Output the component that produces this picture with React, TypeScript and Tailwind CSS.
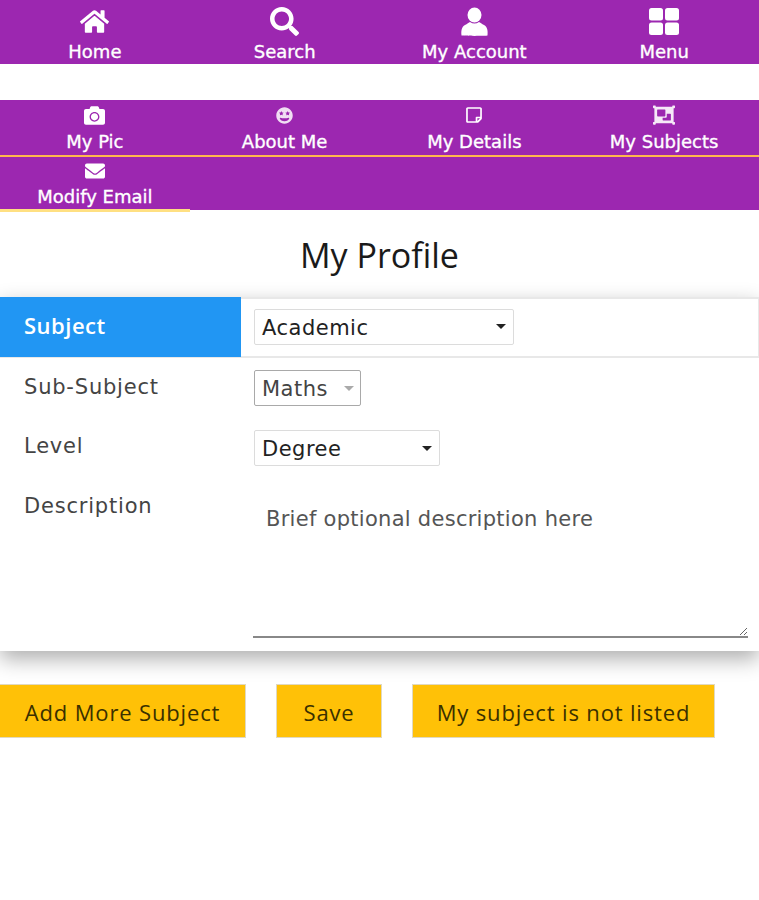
import React from "react";
import { FaHome, FaSearch, FaCamera, FaGrinStars, FaRegStickyNote, FaObjectGroup, FaEnvelope } from "react-icons/fa";

const UserIcon = () => (
  <svg width="27" height="29" viewBox="0 0 27 29" fill="white">
    <ellipse cx="13.5" cy="8" rx="7" ry="7.5" />
    <path d="M0.5 28.5 C0 24 0.5 20 4 18 C6 17 8 15.5 9 15 C12 17 15 17 18 15 C19 15.5 21 17 23 18 C26.5 20 27 24 26.5 28.5 C26 29 1 29 0.5 28.5 Z" />
  </svg>
);

const MenuIcon = () => (
  <svg width="30" height="27" viewBox="0 0 30 27" fill="white">
    <rect x="0" y="0" width="14" height="12.5" rx="2.5" />
    <rect x="16" y="0" width="14" height="12.5" rx="2.5" />
    <rect x="0" y="14.5" width="14" height="12.5" rx="2.5" />
    <rect x="16" y="14.5" width="14" height="12.5" rx="2.5" />
  </svg>
);

const Top = ({ icon, label }: { icon: React.ReactNode; label: string }) => (
  <div className="flex flex-col items-center h-[64px] pt-[7px]">
    <div className="h-[29px] flex items-center text-white">{icon}</div>
    <div className="text-[18px] leading-[24px] mt-[4px] text-white [-webkit-text-stroke:0.35px_white]">{label}</div>
  </div>
);

const Sub = ({ icon, label, tight }: { icon: React.ReactNode; label: string; tight?: boolean }) => (
  <div className="flex flex-col items-center h-full pt-[5px] text-white">
    <div className={`h-[20px] flex items-center ${tight ? "-mt-[1px]" : ""}`}>{icon}</div>
    <div className={`text-[18px] leading-[24px] ${tight ? "mt-[4px]" : "mt-[5px]"} [-webkit-text-stroke:0.35px_white]`}>{label}</div>
  </div>
);

const Caret = ({ color = "#222" }: { color?: string }) => (
  <svg width="10" height="5" viewBox="0 0 10 5" className="shrink-0"><path d="M0 0h10L5 5z" fill={color} /></svg>
);

const Select = ({ value, width, disabled }: { value: string; width: string; disabled?: boolean }) => (
  <div className={`${width} h-[36px] flex items-center justify-between bg-white border rounded-[2px] pl-[7px] ${disabled ? "border-[#a9a9a9] pr-[6px] text-[#444]" : "border-[#dcdcdc] pr-[7px] text-[#222]"} text-[21px] tracking-[0.5px]`}>
    <span className="pt-[4px]">{value}</span>
    <Caret color={disabled ? "#aaa" : "#222"} />
  </div>
);

const Btn = ({ label, className }: { label: string; className: string }) => (
  <button className={`h-[54px] pt-[2px] bg-[#ffc107] border border-[#e0d9c0] text-[#3a3000] text-[22px] tracking-[0.85px] font-['Open_Sans',sans-serif] ${className}`}>{label}</button>
);

const Label = ({ children, pt }: { children: React.ReactNode; pt: string }) => (
  <div className={`w-[241px] pl-[24px] ${pt} text-[21px] tracking-[0.8px] text-[#444]`}>{children}</div>
);

export default function App() {
  return (
    <div className="w-[759px] h-[900px] bg-white overflow-hidden font-['DejaVu_Sans',sans-serif]">
      <div className="grid grid-cols-4 bg-[#9c27b0] h-[64px]">
        <Top icon={<FaHome size={29} />} label="Home" />
        <Top icon={<FaSearch size={29} />} label="Search" />
        <Top icon={<UserIcon />} label="My Account" />
        <Top icon={<MenuIcon />} label="Menu" />
      </div>

      <div className="mt-[36px] bg-[#9c27b0]">
        <div className="grid grid-cols-4 h-[55px]">
          <Sub icon={<FaCamera size={21} />} label="My Pic" />
          <Sub icon={<FaGrinStars size={17} className="opacity-85" />} label="About Me" />
          <Sub icon={<FaRegStickyNote size={18} />} label="My Details" />
          <Sub icon={<FaObjectGroup size={22} className="opacity-90" />} label="My Subjects" />
        </div>
        <div className="h-[2px] bg-[#ffb74d]" />
        <div className="grid grid-cols-4 h-[53px]">
          <div className="border-b-[3px] border-[#ffe082]">
            <Sub icon={<FaEnvelope size={20} />} label="Modify Email" tight />
          </div>
        </div>
      </div>

      <h1 className="text-center text-[34px] leading-[44px] mt-[23px] text-[#1a1a1a] font-['Open_Sans',sans-serif]">My Profile</h1>

      <div className="mt-[20px] h-[354px] shadow-[0_8px_20px_rgba(0,0,0,0.32)]">
        <div className="flex h-[61px] border-y-2 border-r border-[#e8e8e8]">
          <div className="w-[241px] -mt-[2px] -mb-[1px] pb-[3px] bg-[#2196f3] text-white text-[22px] tracking-[0.5px] pl-[24px] flex items-center font-['Open_Sans',sans-serif] font-semibold">Subject</div>
          <div className="flex items-center pl-[13px] pb-[2px]">
            <Select value="Academic" width="w-[260px]" />
          </div>
        </div>
        <div className="flex h-[60px]">
          <Label pt="pt-[14px]">Sub-Subject</Label>
          <div className="pl-[13px] pt-[12px]">
            <Select value="Maths" width="w-[107px]" disabled />
          </div>
        </div>
        <div className="flex h-[60px]">
          <Label pt="pt-[13px]">Level</Label>
          <div className="pl-[13px] pt-[12px]">
            <Select value="Degree" width="w-[186px]" />
          </div>
        </div>
        <div className="flex">
          <Label pt="pt-[13px]">Description</Label>
          <div className="pl-[12px] pt-[11px] flex-1 pr-[11px]">
            <textarea
              className="block w-full h-[149px] pl-[13px] pt-[15px] border-b-2 border-[#888] outline-none text-[21px] tracking-[0.28px] text-[#555] placeholder:text-[#555] font-['DejaVu_Sans',sans-serif]"
              placeholder="Brief optional description here"
            />
          </div>
        </div>
      </div>

      <div className="flex mt-[33px]">
        <Btn label="Add More Subject" className="w-[246px] border-l-0" />
        <Btn label="Save" className="w-[106px] ml-[30px]" />
        <Btn label="My subject is not listed" className="w-[303px] ml-[30px]" />
      </div>
    </div>
  );
}
